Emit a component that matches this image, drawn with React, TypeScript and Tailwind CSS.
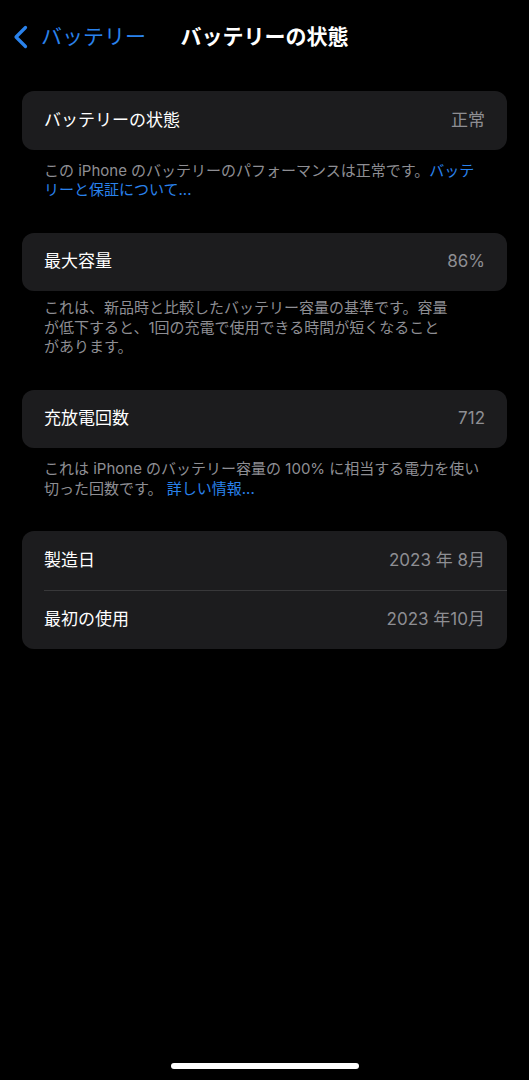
import React from "react";

const FONT = { fontFamily: 'Inter, "Noto Sans CJK JP", "Noto Sans", sans-serif' };

function Row({ label, value }: { label: string; value: string }) {
  return (
    <div className="flex h-[58.5px] items-center justify-between px-[22px]">
      <span className="text-[17px] text-white">{label}</span>
      <span className="text-[17px] text-[#8e8e93]">{value}</span>
    </div>
  );
}

function Footer({ children, top = "mt-[11px]" }: { children: React.ReactNode; top?: string }) {
  return (
    <div className={`${top} px-[22px] text-[15px] leading-[19.5px] text-[#8e8e93] whitespace-nowrap`}>
      {children}
    </div>
  );
}

const Link = ({ children }: { children: React.ReactNode }) => (
  <span className="text-[#2a82ec]">{children}</span>
);

export default function App() {
  return (
    <div className="flex min-h-[1080px] flex-col bg-black" style={FONT}>
      {/* navigation bar */}
      <div className="grid h-[74px] grid-cols-[1fr_auto_1fr] items-center">
        <div className="flex items-center pl-[12px]">
          <svg width="17" height="24" viewBox="0 0 17 24" className="mr-[12px]">
            <path
              d="M13.5 2.5 L4 12 L13.5 21.5"
              fill="none"
              stroke="#2a82ec"
              strokeWidth="3.2"
              strokeLinecap="round"
              strokeLinejoin="round"
            />
          </svg>
          <span className="text-[21px] text-[#2a82ec]">バッテリー</span>
        </div>
        <div className="text-[21px] font-semibold text-white">バッテリーの状態</div>
        <div />
      </div>

      <div className="mt-[17px] px-[22px]">
        <div className="overflow-hidden rounded-[12px] bg-[#1c1c1e]">
          <Row label="バッテリーの状態" value="正常" />
        </div>
        <Footer>
          この iPhone のバッテリーのパフォーマンスは正常です。<Link>バッテ</Link>
          <br />
          <Link>リーと保証について...</Link>
        </Footer>

        <div className="mt-[33px] overflow-hidden rounded-[12px] bg-[#1c1c1e]">
          <Row label="最大容量" value="86%" />
        </div>
        <Footer top="mt-[7px]">
          これは、新品時と比較したバッテリー容量の基準です。容量
          <br />
          が低下すると、1回の充電で使用できる時間が短くなること
          <br />
          があります。
        </Footer>

        <div className="mt-[33px] overflow-hidden rounded-[12px] bg-[#1c1c1e]">
          <Row label="充放電回数" value="712" />
        </div>
        <Footer>
          これは iPhone のバッテリー容量の 100% に相当する電力を使い
          <br />
          切った回数です。 <Link>詳しい情報...</Link>
        </Footer>

        <div className="mt-[33px] overflow-hidden rounded-[12px] bg-[#1c1c1e]">
          <Row label="製造日" value="2023 年 8月" />
          <div className="ml-[22px] h-px bg-[#38383a]" />
          <Row label="最初の使用" value="2023 年10月" />
        </div>
      </div>

      {/* home indicator */}
      <div className="mt-auto flex justify-center pb-[11px]">
        <div className="h-[6px] w-[188px] rounded-full bg-white" />
      </div>
    </div>
  );
}
